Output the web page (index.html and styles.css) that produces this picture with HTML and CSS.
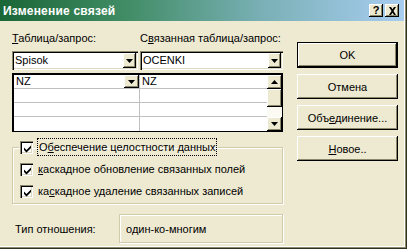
FILE: index.html
```html
<!DOCTYPE html>
<html lang="ru">
<head>
<meta charset="utf-8">
<title>Изменение связей</title>
<link rel="stylesheet" href="styles.css">
</head>
<body>
<div class="window">
  <div class="titlebar">
    <span class="title">Изменение связей</span>
    <div class="tb-buttons">
      <span class="tb-btn">?</span>
      <span class="tb-btn tb-close"><svg width="9" height="8" viewBox="0 0 9 8"><path d="M1 0h2l1.5 2.2L6 0h2L5.5 4 8 8H6L4.5 5.8 3 8H1l2.5-4z" fill="#000"/></svg></span>
    </div>
  </div>
  <div class="content">
    <div class="left">
      <div class="labels">
        <span class="lab lab1"><u>Т</u>аблица/запрос:</span>
        <span class="lab">С<u>в</u>язанная таблица/запрос:</span>
      </div>
      <div class="combos">
        <div class="combo combo1"><span class="val">Spisok</span><span class="dd"><svg width="7" height="4" viewBox="0 0 7 4"><path d="M0 0h7L3.5 4z" fill="#000"/></svg></span></div>
        <div class="combo combo2"><span class="val">OCENKI</span><span class="dd"><svg width="7" height="4" viewBox="0 0 7 4"><path d="M0 0h7L3.5 4z" fill="#000"/></svg></span></div>
      </div>
      <div class="grid">
        <div class="col col1">
          <div class="cell first"><span>NZ</span><span class="cell-dd"><svg width="7" height="4" viewBox="0 0 7 4"><path d="M0 0h7L3.5 4z" fill="#000"/></svg></span></div>
          <div class="cell"></div>
          <div class="cell"></div>
          <div class="cell last"></div>
        </div>
        <div class="col col2">
          <div class="cell first"><span>NZ</span></div>
          <div class="cell"></div>
          <div class="cell"></div>
          <div class="cell last"></div>
        </div>
        <div class="vscroll">
          <span class="sbtn"><svg width="7" height="4" viewBox="0 0 7 4"><path d="M0 4h7L3.5 0z" fill="#000"/></svg></span>
          <span class="thumb"></span>
          <span class="track"></span>
          <span class="sbtn"><svg width="7" height="4" viewBox="0 0 7 4"><path d="M0 0h7L3.5 4z" fill="#000"/></svg></span>
        </div>
      </div>
      <fieldset class="group">
        <legend class="legend"><span class="check"><svg width="9" height="9" viewBox="0 0 9 9"><path d="M1 3.5l2.5 2.5L8 1.5v2.5L3.5 8.5 1 6z" fill="#000"/></svg></span><span class="focus">О<u>б</u>еспечение целостности данных</span></legend>
        <div class="opt"><span class="check"><svg width="9" height="9" viewBox="0 0 9 9"><path d="M1 3.5l2.5 2.5L8 1.5v2.5L3.5 8.5 1 6z" fill="#000"/></svg></span><span><u>к</u>аскадное обновление связанных полей</span></div>
        <div class="opt"><span class="check"><svg width="9" height="9" viewBox="0 0 9 9"><path d="M1 3.5l2.5 2.5L8 1.5v2.5L3.5 8.5 1 6z" fill="#000"/></svg></span><span>ка<u>с</u>кадное удаление связанных записей</span></div>
      </fieldset>
      <div class="type-row">
        <span class="type-label">Тип отношения:</span>
        <div class="type-box">один-ко-многим</div>
      </div>
    </div>
    <div class="right">
      <div class="btn btn-default"><span class="btn-inner">OK</span></div>
      <div class="btn"><span class="btn-inner">Отмена</span></div>
      <div class="btn"><span class="btn-inner">Объ<u>е</u>динение...</span></div>
      <div class="btn"><span class="btn-inner"><u>Н</u>овое..</span></div>
    </div>
  </div>
</div>
</body>
</html>
```
FILE: styles.css
```css
* { box-sizing: border-box; }
html, body { margin: 0; padding: 0; }
body {
  width: 407px;
  height: 249px;
  overflow: hidden;
  background: #eeead2;
  font-family: "Liberation Sans", Arial, sans-serif;
  font-size: 11px;
  color: #000;
}
u { text-decoration: underline; text-underline-offset: 1px; }

.window {
  width: 407px;
  height: 249px;
  background: #eeead2;
  box-shadow: inset -1px -1px #303020, inset -2px -2px #8c886c, inset -3px -3px #ffffff;
  display: flex;
  flex-direction: column;
}

.titlebar {
  height: 21px;
  margin-right: 3px;
  background: linear-gradient(to right, #1b6637 0%, #3f8b63 30%, #7ab0b6 65%, #a8cdf0 100%);
  display: flex;
  align-items: center;
  justify-content: space-between;
  padding: 0 5px 0 3px;
}
.title {
  color: #fff;
  font-weight: bold;
  font-size: 12px;
  letter-spacing: 0.2px;
}
.tb-buttons { display: flex; gap: 2px; }
.tb-btn {
  width: 14px;
  height: 13px;
  background: #eeead2;
  box-shadow: inset -1px -1px #000, inset 1px 1px #fff, inset -2px -2px #8c886c;
  display: flex;
  align-items: center;
  justify-content: center;
  font-weight: bold;
  font-size: 11px;
  line-height: 1;
}

.content {
  display: flex;
  padding: 10px 0 0 12px;
}
.left {
  width: 271px;
  display: flex;
  flex-direction: column;
}
.labels {
  display: flex;
  height: 14px;
  line-height: 14px;
}
.lab1 { width: 128px; }

.combos {
  display: flex;
  gap: 2px;
  margin-top: 6px;
}
.combo {
  height: 19px;
  background: #fff;
  box-shadow: inset 1px 1px #8c886c, inset 2px 2px #000, inset -1px -1px #fff, inset -2px -2px #dcd8c0;
  display: flex;
  align-items: center;
  justify-content: space-between;
  padding: 2px 2px 2px 3px;
}
.combo1 { width: 126px; }
.combo2 { width: 143px; }
.val { line-height: 15px; }
.dd {
  width: 13px;
  height: 15px;
  background: #eeead2;
  box-shadow: inset -1px -1px #000, inset 1px 1px #fff, inset -2px -2px #8c886c;
  display: flex;
  align-items: center;
  justify-content: center;
}

.grid {
  margin-top: 3px;
  width: 271px;
  height: 59px;
  display: flex;
  background: #fff;
  border-top: 2px solid #000;
  border-left: 2px solid #000;
  border-right: 1px solid #000;
  border-bottom: 1px solid #000;
}
.col { display: flex; flex-direction: column; }
.col1 { width: 126px; border-right: 1px solid #c0c0c0; }
.col2 { width: 127px; }
.cell {
  height: 14px;
  border-bottom: 1px solid #c0c0c0;
  display: flex;
  align-items: center;
  justify-content: space-between;
  padding-left: 2px;
  line-height: 13px;
}
.cell.last { border-bottom: none; height: 14px; }
.cell-dd {
  width: 15px;
  height: 13px;
  background: #eeead2;
  box-shadow: inset -1px -1px #000, inset 1px 1px #fff, inset -2px -2px #8c886c;
  display: flex;
  align-items: center;
  justify-content: center;
}
.vscroll {
  width: 15px;
  display: flex;
  flex-direction: column;
  background: #f6f4e6;
}
.sbtn {
  height: 14px;
  background: #eeead2;
  box-shadow: inset -1px -1px #000, inset 1px 1px #fff, inset -2px -2px #8c886c;
  display: flex;
  align-items: center;
  justify-content: center;
}
.thumb {
  height: 18px;
  background: #eeead2;
  box-shadow: inset -1px -1px #000, inset 1px 1px #fff, inset -2px -2px #8c886c;
}
.track { flex: 1; background: #fbfaf3; }

.group {
  margin: 7px 0 0 0;
  padding: 3px 0 0 6px;
  min-width: 0;
  border: 1px solid #d0cba8;
  box-shadow: 1px 1px #ffffff, inset 1px 1px #ffffff;
  height: 65px;
}
.legend {
  padding: 0 2px 0 1px;
  margin-left: 0;
  display: flex;
  align-items: center;
  height: 16px;
}
.check {
  width: 13px;
  height: 13px;
  background: #fff;
  box-shadow: inset 1px 1px #8c886c, inset 2px 2px #000, inset -1px -1px #fff, inset -2px -2px #dcd8c0;
  display: inline-flex;
  align-items: center;
  justify-content: center;
  padding: 2px 0 0 2px;
  margin-right: 5px;
  flex: none;
}
.focus {
  outline: 1px dotted #000;
  outline-offset: 0;
  padding: 1px 1px;
  line-height: 14px;
}
.opt {
  display: flex;
  align-items: center;
  height: 22px;
  padding-left: 1px;
}

.type-row {
  display: flex;
  align-items: center;
  margin-top: 10px;
  height: 29px;
}
.type-label { width: 107px; padding-left: 3px; }
.type-box {
  width: 164px;
  height: 29px;
  border: 1px solid #d0cba8;
  box-shadow: 1px 1px #ffffff, inset 1px 1px #ffffff;
  display: flex;
  align-items: center;
  padding-left: 6px;
}

.right {
  margin-left: 14px;
  display: flex;
  flex-direction: column;
  gap: 6px;
  padding-top: 11px;
  width: 101px;
}
.btn {
  height: 25px;
  background: #eeead2;
  box-shadow: inset -1px -1px #000, inset 1px 1px #fff, inset -2px -2px #8c886c;
  display: flex;
  align-items: center;
  justify-content: center;
}
.btn-default {
  height: 26px;
  border: 1px solid #000;
}
```
